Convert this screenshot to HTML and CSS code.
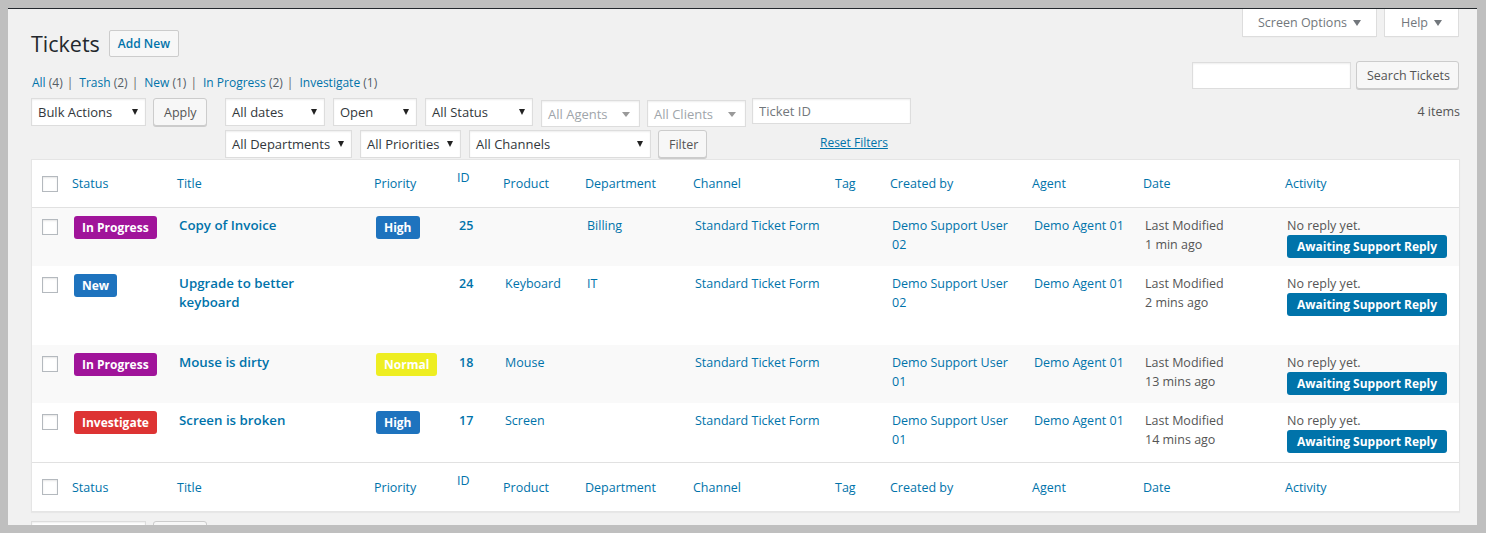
FILE: index.html
```html
<!DOCTYPE html>
<html lang="en">
<head>
<meta charset="utf-8">
<title>Tickets</title>
<link rel="stylesheet" href="styles.css">
</head>
<body>
<div class="frame">
  <div class="window">
    <div class="wrap">
      <div class="head">
        <div class="head-left">
          <div class="title-row">
            <h1 class="page-title">Tickets</h1>
            <a class="page-action">Add New</a>
          </div>
          <ul class="subsubsub">
            <li><a class="sub-link">All</a> <span class="sub-count">(4)</span><span class="sep">|</span></li>
            <li><a class="sub-link">Trash</a> <span class="sub-count">(2)</span><span class="sep">|</span></li>
            <li><a class="sub-link">New</a> <span class="sub-count">(1)</span><span class="sep">|</span></li>
            <li><a class="sub-link">In Progress</a> <span class="sub-count">(2)</span><span class="sep">|</span></li>
            <li><a class="sub-link">Investigate</a> <span class="sub-count">(1)</span></li>
          </ul>
        </div>
        <div class="head-right">
          <div class="meta-links">
            <button class="meta-tab tab-screen">Screen Options <span class="caret"></span></button>
            <button class="meta-tab tab-help">Help <span class="caret"></span></button>
          </div>
          <div class="search-box">
            <input class="field search-input" type="search" aria-label="Search Tickets">
            <button class="btn btn-search">Search Tickets</button>
          </div>
        </div>
      </div>

      <div class="tablenav">
        <div class="bulk">
          <div class="select w-bulk"><span>Bulk Actions</span><span class="arrow"></span></div>
          <button class="btn btn-apply">Apply</button>
        </div>
        <div class="filters">
          <div class="filter-row">
            <div class="select w-dates"><span>All dates</span><span class="arrow"></span></div>
            <div class="select w-open"><span>Open</span><span class="arrow"></span></div>
            <div class="select w-status"><span>All Status</span><span class="arrow"></span></div>
            <div class="select select-muted w-agents"><span>All Agents</span><span class="arrow"></span></div>
            <div class="select select-muted w-clients"><span>All Clients</span><span class="arrow"></span></div>
            <input class="field ticket-id" type="text" placeholder="Ticket ID">
          </div>
          <div class="filter-row">
            <div class="select w-depts"><span>All Departments</span><span class="arrow"></span></div>
            <div class="select w-prios"><span>All Priorities</span><span class="arrow"></span></div>
            <div class="select w-channels"><span>All Channels</span><span class="arrow"></span></div>
            <button class="btn btn-filter">Filter</button>
            <a class="reset-link">Reset Filters</a>
          </div>
        </div>
        <div class="count">4 items</div>
      </div>

      <table class="list">
        <colgroup>
          <col class="c-check"><col class="c-status"><col class="c-title"><col class="c-prio"><col class="c-id"><col class="c-product"><col class="c-dept"><col class="c-channel"><col class="c-tag"><col class="c-created"><col class="c-agent"><col class="c-date"><col class="c-activity">
        </colgroup>
        <thead>
          <tr>
            <th class="check"><span class="cb"></span></th>
            <th>Status</th><th>Title</th><th>Priority</th><th class="th-id">ID</th><th>Product</th><th>Department</th><th>Channel</th><th>Tag</th><th>Created by</th><th>Agent</th><th>Date</th><th>Activity</th>
          </tr>
        </thead>
        <tbody>
          <tr class="row h58">
            <td class="check"><span class="cb"></span></td>
            <td><span class="badge b-progress">In Progress</span></td>
            <td><a class="row-title">Copy of Invoice</a></td>
            <td><span class="badge b-high">High</span></td>
            <td class="id">25</td>
            <td></td>
            <td class="lnk">Billing</td>
            <td class="lnk nowrap">Standard Ticket Form</td>
            <td></td>
            <td class="lnk">Demo Support User 02</td>
            <td class="lnk">Demo Agent 01</td>
            <td class="muted">Last Modified<br>1 min ago</td>
            <td><div class="muted">No reply yet.</div><span class="badge b-await">Awaiting Support Reply</span></td>
          </tr>
          <tr class="row h79">
            <td class="check"><span class="cb"></span></td>
            <td><span class="badge b-new">New</span></td>
            <td><a class="row-title">Upgrade to better keyboard</a></td>
            <td></td>
            <td class="id">24</td>
            <td class="lnk">Keyboard</td>
            <td class="lnk">IT</td>
            <td class="lnk nowrap">Standard Ticket Form</td>
            <td></td>
            <td class="lnk">Demo Support User 02</td>
            <td class="lnk">Demo Agent 01</td>
            <td class="muted">Last Modified<br>2 mins ago</td>
            <td><div class="muted">No reply yet.</div><span class="badge b-await">Awaiting Support Reply</span></td>
          </tr>
          <tr class="row h58">
            <td class="check"><span class="cb"></span></td>
            <td><span class="badge b-progress">In Progress</span></td>
            <td><a class="row-title">Mouse is dirty</a></td>
            <td><span class="badge b-normal">Normal</span></td>
            <td class="id">18</td>
            <td class="lnk">Mouse</td>
            <td></td>
            <td class="lnk nowrap">Standard Ticket Form</td>
            <td></td>
            <td class="lnk">Demo Support User 01</td>
            <td class="lnk">Demo Agent 01</td>
            <td class="muted">Last Modified<br>13 mins ago</td>
            <td><div class="muted">No reply yet.</div><span class="badge b-await">Awaiting Support Reply</span></td>
          </tr>
          <tr class="row h59">
            <td class="check"><span class="cb"></span></td>
            <td><span class="badge b-investigate">Investigate</span></td>
            <td><a class="row-title">Screen is broken</a></td>
            <td><span class="badge b-high">High</span></td>
            <td class="id">17</td>
            <td class="lnk">Screen</td>
            <td></td>
            <td class="lnk nowrap">Standard Ticket Form</td>
            <td></td>
            <td class="lnk">Demo Support User 01</td>
            <td class="lnk">Demo Agent 01</td>
            <td class="muted">Last Modified<br>14 mins ago</td>
            <td><div class="muted">No reply yet.</div><span class="badge b-await">Awaiting Support Reply</span></td>
          </tr>
        </tbody>
        <tfoot>
          <tr>
            <th class="check"><span class="cb"></span></th>
            <th>Status</th><th>Title</th><th>Priority</th><th class="th-id">ID</th><th>Product</th><th>Department</th><th>Channel</th><th>Tag</th><th>Created by</th><th>Agent</th><th>Date</th><th>Activity</th>
          </tr>
        </tfoot>
      </table>

      <div class="tablenav-bottom">
        <div class="select w-bulk" aria-label="Bulk Actions"></div>
        <div class="btn btn-apply" aria-label="Apply"></div>
      </div>
    </div>
  </div>
</div>
</body>
</html>
```

FILE: styles.css
```css
* { box-sizing: border-box; }

html, body {
  margin: 0;
  padding: 0;
}

body {
  background: #bfbfbf;
  font-family: "Open Sans", "Noto Sans", sans-serif;
  font-size: 12px;
  color: #444;
}

.frame {
  height: 533px;
  padding: 8px 9px 8px 8px;
}

.window {
  height: 517px;
  border-top: 1px solid #23282d;
  background: #f1f1f1;
  overflow: hidden;
}

.wrap {
  padding: 0 17px 0 23px;
}

/* ---------- head ---------- */
.head {
  display: flex;
  justify-content: space-between;
  align-items: flex-start;
  height: 83px;
}

.head-left {
  padding-top: 21px;
}

.title-row {
  display: flex;
  align-items: center;
  gap: 9px;
  height: 27px;
}

.page-title {
  margin: 0;
  font-size: 21.5px;
  font-weight: 400;
  line-height: 27px;
  color: #23282d;
}

.page-action {
  display: inline-block;
  height: 27px;
  padding: 0 8px;
  border: 1px solid #ccc;
  border-radius: 2px;
  background: #f7f7f7;
  color: #0073aa;
  font-size: 12px;
  font-weight: 600;
  line-height: 25px;
}

.subsubsub {
  display: flex;
  margin: 16px 0 0;
  padding: 0 0 0 1px;
  list-style: none;
  line-height: 20px;
  color: #666;
}

.sub-link { color: #0073aa; }
.sub-count { color: #555d66; }
.sep { margin: 0 6px 0 4px; color: #666; }

.head-right {
  display: flex;
  flex-direction: column;
  align-items: flex-end;
}

.meta-links {
  display: flex;
  gap: 7px;
  margin-right: 1px;
}

.meta-tab {
  height: 28px;
  padding: 0;
  border: 1px solid #ddd;
  border-top: none;
  background: #fff;
  box-shadow: 0 1px 1px -1px rgba(0,0,0,.1);
  color: #72777c;
  font-family: "Open Sans", sans-serif;
  font-size: 12.5px;
  display: flex;
  align-items: center;
  justify-content: center;
  gap: 6px;
}

.tab-screen { width: 135px; }
.tab-help { width: 75px; }

.caret {
  width: 0;
  height: 0;
  border-left: 4px solid transparent;
  border-right: 4px solid transparent;
  border-top: 6px solid #72777c;
}

.search-box {
  display: flex;
  align-items: center;
  gap: 5px;
  margin-top: 24px;
  margin-right: 1px;
}

.field {
  background: #fff;
  border: 1px solid #ddd;
  box-shadow: inset 0 1px 2px rgba(0,0,0,.07);
  font-family: "Open Sans", sans-serif;
  font-size: 13px;
  color: #32373c;
  outline: none;
}

.search-input {
  width: 159px;
  height: 27px;
}

.btn {
  display: inline-block;
  height: 28px;
  padding: 0 10px;
  border: 1px solid #ccc;
  border-radius: 3px;
  background: #f7f7f7;
  box-shadow: 0 1px 0 #ccc;
  color: #555;
  font-family: "Open Sans", sans-serif;
  font-size: 12.5px;
  white-space: nowrap;
}

.btn-search { width: 103px; }

/* ---------- tablenav ---------- */
.tablenav {
  display: flex;
  align-items: flex-start;
  height: 60px;
  margin: 6px 0 1px;
}

.bulk {
  display: flex;
  gap: 7px;
}

.btn-apply { width: 54px; }
.btn-filter { width: 49px; }

.filters {
  display: flex;
  flex-direction: column;
  gap: 4px;
  margin-left: 18px;
}

.filter-row {
  display: flex;
  align-items: flex-start;
  gap: 8px;
}

.select {
  display: flex;
  align-items: center;
  justify-content: space-between;
  height: 28px;
  padding: 0 7px 0 6px;
  background: #fff;
  border: 1px solid #ddd;
  box-shadow: inset 0 1px 2px rgba(0,0,0,.07);
  font-size: 13px;
  color: #32373c;
  white-space: nowrap;
}

.arrow {
  width: 0;
  height: 0;
  border-left: 3px solid transparent;
  border-right: 3px solid transparent;
  border-top: 6px solid #222;
}

.select-muted {
  height: 27px;
  margin-top: 2px;
  margin-bottom: -1px;
  color: #a0a5aa;
  padding-top: 1px;
  padding-right: 9px;
}

.select-muted .arrow {
  border-left-width: 4px;
  border-right-width: 4px;
  border-top: 5px solid #999;
}

.w-bulk { width: 115px; }
.w-dates { width: 100px; }
.w-open { width: 84px; }
.w-status { width: 108px; }
.w-agents { width: 99px; }
.w-clients { width: 99px; margin-left: -1px; }
.w-depts { width: 127px; }
.w-prios { width: 101px; }
.w-channels { width: 182px; margin-right: -1px; }

.ticket-id {
  width: 159px;
  height: 26px;
  margin-left: -2px;
  padding: 0 6px;
}

.ticket-id::placeholder { color: #72777c; }

.reset-link {
  margin-left: 105px;
  line-height: 26px;
  color: #0073aa;
  text-decoration: underline;
}

.count {
  margin-left: auto;
  line-height: 28px;
  color: #555;
  font-size: 12.5px;
}

/* ---------- table ---------- */
.list {
  width: 100%;
  table-layout: fixed;
  border-collapse: separate;
  border-spacing: 0;
  background: #fff;
  border: 1px solid #e5e5e5;
  box-shadow: 0 1px 1px rgba(0,0,0,.04);
  font-size: 12.5px;
}

.c-check { width: 32px; }
.c-status { width: 105px; }
.c-title { width: 197px; }
.c-prio { width: 83px; }
.c-id { width: 46px; }
.c-product { width: 82px; }
.c-dept { width: 108px; }
.c-channel { width: 142px; }
.c-tag { width: 55px; }
.c-created { width: 142px; }
.c-agent { width: 111px; }
.c-date { width: 142px; }
.c-activity { width: 182px; }

.list th {
  padding: 0 8px;
  text-align: left;
  font-weight: 400;
  color: #0073aa;
  vertical-align: middle;
  white-space: nowrap;
}

.list thead th {
  height: 48px;
  border-bottom: 1px solid #e1e1e1;
}

.list tfoot th {
  height: 49px;
  border-top: 1px solid #e1e1e1;
}

.list th.th-id { padding-bottom: 13px; }

.list th.check,
.list td.check {
  padding: 0 0 0 10px;
}

.list td.check { padding-top: 11px; }

.cb {
  display: block;
  width: 16px;
  height: 16px;
  border: 1px solid #b4b9be;
  background: #fff;
  box-shadow: inset 0 1px 2px rgba(0,0,0,.1);
}

.list td {
  padding: 8px 10px;
  vertical-align: top;
  line-height: 19px;
  color: #555;
}

.list td.nowrap { white-space: nowrap; }

.row:nth-child(odd) { background: #f9f9f9; }

.h58 { height: 58px; }
.h59 { height: 59px; }
.h79 { height: 79px; }

.lnk, .list td.lnk { color: #0073aa; }
.list td.id { color: #0073aa; font-weight: 600; }
.muted { color: #555; }

.row-title {
  display: block;
  max-width: 160px;
  color: #0073aa;
  font-weight: 600;
  font-size: 13.3px;
}

.badge {
  display: inline-block;
  padding: 2px 8px;
  line-height: 19px;
  border-radius: 3px;
  color: #fff;
  font-size: 12px;
  font-weight: 700;
  white-space: nowrap;
}

.b-progress { background: #a0149a; }
.b-new { background: #1e73be; }
.b-investigate { background: #dd3333; }
.b-high { background: #1e73be; }
.b-normal { background: #eeee22; }
.b-await { background: #0073aa; padding: 2px 10px; }

/* ---------- bottom nav ---------- */
.tablenav-bottom {
  display: flex;
  gap: 7px;
  margin-top: 9px;
}
```
